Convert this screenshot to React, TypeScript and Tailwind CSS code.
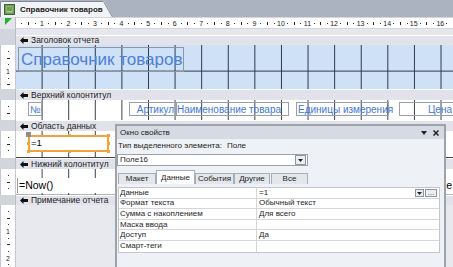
import React from 'react'

const hSlots = Array.from({ length: 66 }, (_, i) => i + 1)

function Tick({ n, vertical }: { n: number; vertical?: boolean }) {
  if (n % 4 === 0) return <span className="text-[7px] leading-none text-[#222]">{n / 4}</span>
  if (n % 4 === 2) return vertical ? <span className="w-[3px] h-px bg-[#222]" /> : <span className="w-px h-[3px] bg-[#222]" />
  return <span className="w-px h-px bg-[#333]" />
}

function HRuler() {
  return (
    <div className="flex-1 flex items-center overflow-hidden">
      <div className="w-[2.6px] shrink-0" />
      {hSlots.map(n => (
        <div key={n} className="w-[6.65px] shrink-0 flex items-center justify-center">
          <Tick n={n} />
        </div>
      ))}
    </div>
  )
}

function VRuler({ count }: { count: number }) {
  const slots = Array.from({ length: count }, (_, i) => i + 1)
  return (
    <div className="w-[16px] shrink-0 bg-white border-x border-[#c4c7cf] flex flex-col items-center overflow-hidden">
      <div className="h-[3.3px] shrink-0" />
      {slots.map(n => (
        <div key={n} className="h-[6.65px] shrink-0 flex items-center justify-center">
          <Tick n={n} vertical />
        </div>
      ))}
    </div>
  )
}

function SectionIcon() {
  return (
    <svg width="8" height="7" viewBox="0 0 8 7" className="shrink-0">
      <path d="M0 3.5 L3.5 0 L3.5 2 L8 2 L8 5 L3.5 5 L3.5 7 Z" fill="#111" />
    </svg>
  )
}

function SectionBar({ title, tall }: { title: string; tall?: boolean }) {
  return (
    <div className={tall ? 'flex h-[11px] shrink-0' : 'flex h-[10px] shrink-0'}>
      <div className="w-[16px] shrink-0 bg-[#d3d5dd] border-r border-[#b9bcc5]" />
      <div className="flex-1 flex items-center gap-[3px] pl-[4px] bg-[#e2e3ea] border-t border-white text-[8.5px] text-[#1b1b1b] leading-none">
        <SectionIcon />
        <span>{title}</span>
      </div>
    </div>
  )
}

function ReportIcon() {
  return (
    <svg width="11" height="11" viewBox="0 0 11 11" className="shrink-0">
      <rect x="0.5" y="0.5" width="10" height="10" fill="#6f9f55" stroke="#3e6530" />
      <rect x="2.5" y="2.5" width="6" height="6" fill="#a9cf8d" />
      <path d="M3 4h5M3 6h5" stroke="#3e6530" />
    </svg>
  )
}

const props = [
  ['Данные', '=1'],
  ['Формат текста', 'Обычный текст'],
  ['Сумма с накоплением', 'Для всего'],
  ['Маска ввода', ''],
  ['Доступ', 'Да'],
  ['Смарт-теги', ''],
]

function PropertySheet() {
  return (
    <div className="absolute left-[115px] top-[124px] w-[331px] h-[150px] border-2 border-[#9ea3ab] bg-[#eef1f5] flex flex-col text-[8px] text-[#1e1e1e] leading-none">
      <div className="h-[13px] shrink-0 bg-[#d6dbe3] flex items-center justify-between pl-[3px] pr-[5px]">
        <span>Окно свойств</span>
        <div className="flex items-center gap-[6px]">
          <svg width="6" height="4" viewBox="0 0 6 4"><path d="M0 0h6L3 4z" fill="#222" /></svg>
          <svg width="6" height="6" viewBox="0 0 6 6"><path d="M0.5 0.5l5 5M5.5 0.5l-5 5" stroke="#222" strokeWidth="1.5" /></svg>
        </div>
      </div>
      <div className="h-[13px] shrink-0 flex items-center pl-[1px] gap-[5px]">
        <span>Тип выделенного элемента:</span>
        <span>Поле</span>
      </div>
      <div className="mt-[2px] h-[12px] w-[191px] shrink-0 bg-white border border-[#9ba1a9] flex items-center">
        <span className="flex-1 pl-[2px]">Поле16</span>
        <div className="w-[11px] h-[10px] mr-[1px] border border-[#8f959d] bg-[#eceef1] flex items-center justify-center">
          <svg width="5" height="3" viewBox="0 0 5 3"><path d="M0 0h5L2.5 3z" fill="#222" /></svg>
        </div>
      </div>
      <div className="mt-[4px] h-[14px] shrink-0 flex items-end pl-[1px]">
        <div className="w-[38px] h-[11px] flex items-center justify-center bg-[#e3e6ea] border border-b-0 border-[#a9aeb6]">Макет</div>
        <div className="w-[39px] h-[14px] flex items-center justify-center bg-white border border-b-0 border-[#a9aeb6]">Данные</div>
        <div className="w-[39px] h-[11px] flex items-center justify-center bg-[#e3e6ea] border border-b-0 border-[#a9aeb6]">События</div>
        <div className="w-[36px] h-[11px] flex items-center justify-center bg-[#e3e6ea] border border-b-0 border-[#a9aeb6]">Другие</div>
        <div className="ml-[1px] w-[37px] h-[11px] flex items-center justify-center bg-[#e3e6ea] border border-b-0 border-[#a9aeb6]">Все</div>
      </div>
      <div className="mt-[3px] ml-[1px] w-[322px] shrink-0 bg-white border border-[#c3c7cd] flex flex-col">
        {props.map(([name, value], i) => (
          <div key={name} className="h-[10.6px] flex border-b border-[#d3d6db] last:border-b-0">
            <div className="w-[138px] shrink-0 flex items-center pl-[1px] border-r border-[#d3d6db]">{name}</div>
            <div className="flex-1 flex items-center pl-[2px]">
              <span className="flex-1">{value}</span>
              {i === 0 && (
                <div className="flex gap-[1px] pr-[2px]">
                  <div className="w-[9px] h-[8px] border border-[#8f959d] bg-[#eceef1] flex items-end justify-center pb-[1px]">
                    <svg width="5" height="3" viewBox="0 0 5 3"><path d="M0 0h5L2.5 3z" fill="#222" /></svg>
                  </div>
                  <div className="w-[12px] h-[8px] border border-[#8f959d] bg-[#eceef1] flex items-center justify-center text-[7px]">…</div>
                </div>
              )}
            </div>
          </div>
        ))}
      </div>
    </div>
  )
}

export default function App() {
  return (
    <div className="w-[453px] h-[267px] overflow-hidden relative flex flex-col bg-[#e8eaf0] [font-family:'Liberation_Sans',Arial,sans-serif]">
      {/* document tab */}
      <div className="h-[17px] shrink-0 bg-[#aab3bf] flex items-end">
        <div className="h-[16px] w-[103px] flex items-center gap-[5px] pl-[3px] bg-[#f2f3f6] border-t border-l border-[#7f8896] rounded-tl-[2px]">
          <ReportIcon />
          <span className="text-[8px] font-bold text-[#1b1b1b] whitespace-nowrap">Справочник товаров</span>
        </div>
        <svg width="10" height="16" viewBox="0 0 10 16" className="shrink-0">
          <polygon points="0,0 1,0 10,16 0,16" fill="#f2f3f6" />
          <line x1="0.5" y1="0.5" x2="9.5" y2="16" stroke="#7f8896" />
        </svg>
      </div>

      {/* ruler */}
      <div className="h-[12px] shrink-0 flex">
        <div className="w-[16px] shrink-0 bg-[#e4e5eb] border-r border-[#b9bcc5] pl-[5px] pt-[1px]">
          <svg width="7" height="7" viewBox="0 0 7 7"><polygon points="0,0 7,0 0,7" fill="#22b02a" /></svg>
        </div>
        <div className="flex-1 flex bg-white border-y border-[#d4d6dc]">
          <HRuler />
        </div>
      </div>
      <div className="h-[6px] shrink-0 flex">
        <div className="w-[16px] shrink-0 bg-[#d3d5dd] border-r border-[#b9bcc5]" />
        <div className="flex-1 bg-[#e6e7ed]" />
      </div>

      <SectionBar title="Заголовок отчета" />
      <div className="h-[44px] shrink-0 flex">
        <VRuler count={6} />
        <div className="flex-1 bg-[#cfe1f6] bg-[image:linear-gradient(to_left,#27384a_1px,transparent_1px),linear-gradient(to_top,#27384a_1px,transparent_1px)] bg-[length:26.6px_26.6px] pt-[2px] pl-[2px]">
          <div className="w-[166px] h-[25px] border border-[#8d96a3] flex items-center pl-[2px] text-[17px] text-[#4d80d8] whitespace-nowrap">
            Справочник товаров
          </div>
        </div>
      </div>

      <SectionBar title="Верхний колонтитул" tall />
      <div className="h-[20px] shrink-0 flex">
        <VRuler count={2} />
        <div className="flex-1 flex items-start pt-[2px] bg-white bg-[image:linear-gradient(to_left,#3a3f46_1px,transparent_1px)] bg-[length:26.6px_100%] text-[10px] text-[#3f78d6] whitespace-nowrap overflow-hidden">
          <div className="ml-[12px] w-[14px] h-[14px] shrink-0 border border-[#9aa0a8] flex items-center pl-[1px]">№</div>
          <div className="ml-[87px] w-[47px] h-[14px] shrink-0 border border-[#9aa0a8] flex items-center justify-end pr-[1px]">Артикул</div>
          <div className="w-[113px] h-[14px] shrink-0 border border-[#9aa0a8] flex items-center">Наименование товара</div>
          <div className="ml-[7px] w-[93px] h-[14px] shrink-0 border border-[#9aa0a8] flex items-center pl-[1px]">Единицы измерения</div>
          <div className="ml-[10px] w-[60px] h-[14px] shrink-0 border border-[#9aa0a8] flex items-center justify-end pr-[6px]">Цена</div>
        </div>
      </div>

      <SectionBar title="Область данных" tall />
      <div className="h-[27px] shrink-0 flex">
        <VRuler count={3} />
        <div className="flex-1 pt-[4px] pl-[12px] bg-white bg-[image:linear-gradient(to_left,#3a3f46_1px,transparent_1px),linear-gradient(to_top,#3a3f46_1px,transparent_1px)] bg-[length:26.6px_26.6px]">
          <div className="relative w-[81px] h-[17px] border-2 border-[#f2a23a] bg-white flex items-center pl-[1px] text-[9.5px] text-black">
            =1
            <span className="absolute -left-[4px] -top-[5px] w-[5px] h-[5px] bg-[#8d8d8d]" />
            <span className="absolute left-[38px] -top-[3px] w-[3px] h-[3px] bg-[#f2a23a]" />
            <span className="absolute left-[38px] -bottom-[3px] w-[3px] h-[3px] bg-[#f2a23a]" />
            <span className="absolute -left-[3px] top-[5px] w-[3px] h-[3px] bg-[#f2a23a]" />
            <span className="absolute -right-[3px] top-[5px] w-[3px] h-[3px] bg-[#f2a23a]" />
            <span className="absolute -right-[3px] -top-[3px] w-[3px] h-[3px] bg-[#f2a23a]" />
            <span className="absolute -right-[3px] -bottom-[3px] w-[3px] h-[3px] bg-[#f2a23a]" />
            <span className="absolute -left-[3px] -bottom-[3px] w-[3px] h-[3px] bg-[#f2a23a]" />
          </div>
        </div>
      </div>

      <SectionBar title="Нижний колонтитул" tall />
      <div className="h-[26px] shrink-0 flex">
        <VRuler count={3} />
        <div className="flex-1 flex items-start pt-[9px] bg-white bg-[image:linear-gradient(to_left,#3a3f46_1px,transparent_1px),linear-gradient(to_top,#3a3f46_1px,transparent_1px)] bg-[length:26.6px_26.6px]">
          <div className="ml-[1px] w-[120px] h-[15px] bg-white border-l border-[#9aa0a8] flex items-center pl-[1px] text-[10.5px] text-black">=Now()</div>
          <div className="flex-1 h-[15px] flex items-center justify-end pr-[1px] text-[10.5px] text-black">Page</div>
        </div>
      </div>

      <SectionBar title="Примечание отчета" />
      <div className="flex-1 flex min-h-0">
        <VRuler count={9} />
        <div className="flex-1 bg-[#e7e9ef]" />
      </div>

      <PropertySheet />
    </div>
  )
}
